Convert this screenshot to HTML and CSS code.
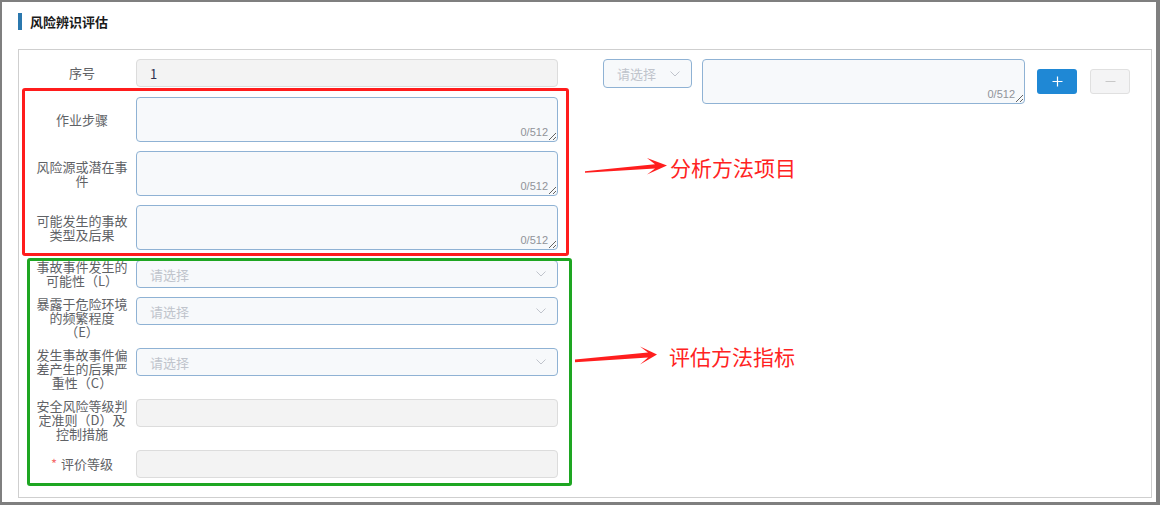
FILE: index.html
```html
<!DOCTYPE html>
<html lang="zh-CN">
<head>
<meta charset="utf-8">
<title>风险辨识评估</title>
<link rel="stylesheet" href="styles.css">
</head>
<body>
<div class="frame">
  <div class="title"><span class="title-bar"></span><span class="title-text">风险辨识评估</span></div>
  <div class="panel">
    <div class="form">
      <div class="item gap10">
        <div class="label">序号</div>
        <div class="input disabled"><span class="value">1</span></div>
      </div>
      <div class="item">
        <div class="label">作业步骤</div>
        <div class="ta-wrap"><textarea class="ta"></textarea><span class="count">0/512</span></div>
      </div>
      <div class="item">
        <div class="label">风险源或潜在事件</div>
        <div class="ta-wrap"><textarea class="ta"></textarea><span class="count">0/512</span></div>
      </div>
      <div class="item gap10">
        <div class="label">可能发生的事故类型及后果</div>
        <div class="ta-wrap"><textarea class="ta"></textarea><span class="count">0/512</span></div>
      </div>
      <div class="item">
        <div class="label">事故事件发生的可能性（L）</div>
        <div class="select"><span>请选择</span><svg class="chev" width="10" height="6" viewBox="0 0 10 6"><path d="M0.5 0.5 L5 5 L9.5 0.5" fill="none" stroke="#c0c4cc" stroke-width="1"/></svg></div>
      </div>
      <div class="item">
        <div class="label">暴露于危险环境的频繁程度（E）</div>
        <div class="select"><span>请选择</span><svg class="chev" width="10" height="6" viewBox="0 0 10 6"><path d="M0.5 0.5 L5 5 L9.5 0.5" fill="none" stroke="#c0c4cc" stroke-width="1"/></svg></div>
      </div>
      <div class="item">
        <div class="label">发生事故事件偏差产生的后果严重性（C）</div>
        <div class="select"><span>请选择</span><svg class="chev" width="10" height="6" viewBox="0 0 10 6"><path d="M0.5 0.5 L5 5 L9.5 0.5" fill="none" stroke="#c0c4cc" stroke-width="1"/></svg></div>
      </div>
      <div class="item">
        <div class="label">安全风险等级判定准则（D）及控制措施</div>
        <div class="input disabled"></div>
      </div>
      <div class="item">
        <div class="label"><span><span class="req">*</span>评价等级</span></div>
        <div class="input disabled"></div>
      </div>
    </div>
    <div class="extra">
      <div class="select small"><span>请选择</span><svg class="chev" width="10" height="6" viewBox="0 0 10 6"><path d="M0.5 0.5 L5 5 L9.5 0.5" fill="none" stroke="#c0c4cc" stroke-width="1"/></svg></div>
      <div class="ta-wrap small"><textarea class="ta"></textarea><span class="count">0/512</span></div>
      <div class="btn btn-add"><svg width="11" height="11" viewBox="0 0 11 11"><path d="M5.5 0.5 V10.5 M0.5 5.5 H10.5" stroke="#fff" stroke-width="1.2"/></svg></div>
      <div class="btn btn-del"><svg width="11" height="11" viewBox="0 0 11 11"><path d="M0.5 5.5 H10.5" stroke="#c8c8c8" stroke-width="1"/></svg></div>
    </div>
  </div>

  <div class="mark mark-red"></div>
  <div class="mark mark-green"></div>
  <svg class="arrows" width="1160" height="505" viewBox="0 0 1160 505">
    <polygon points="585,171.2 655,164.3 647,158 667,165.5 647,174.5 655,168.6 585,172.8" fill="#ff1e1e"/>
    <polygon points="575,359.6 648,352.6 640,346.5 657,354.5 640,364.5 648,357.4 575,362.2" fill="#ff1e1e"/>
  </svg>
  <span class="note note-1">分析方法项目</span>
  <span class="note note-2">评估方法指标</span>
</div>
</body>
</html>
```

FILE: styles.css
```css
html, body {
  margin: 0;
  padding: 0;
  background: #ffffff;
}

.frame {
  position: relative;
  width: 1160px;
  height: 505px;
  box-sizing: border-box;
  border-style: solid;
  border-color: #7f7f7f;
  border-width: 2px 4px 3px 2px;
  background: #ffffff;
  display: flex;
  flex-direction: column;
  font-family: "Noto Sans CJK SC", "Liberation Sans", sans-serif;
  text-spacing-trim: space-all;
}

.title {
  display: flex;
  align-items: center;
  height: 17px;
  padding: 11px 0 0 16px;
  margin-bottom: 19px;
  flex: none;
}

.title-bar {
  width: 4px;
  height: 17px;
  background: #2b78ae;
  margin-right: 8px;
}

.title-text {
  font-size: 13px;
  font-weight: bold;
  line-height: 17px;
  color: #1a1a1a;
}

.panel {
  flex: 1;
  margin: 0 4px 4px 16px;
  border: 1px solid #cfcfcf;
  padding: 9px 0 0 15px;
  display: flex;
  align-items: flex-start;
}

.form {
  width: 524px;
  flex: none;
}

.item {
  display: flex;
  align-items: stretch;
  margin-bottom: 9px;
}

.item.gap10 {
  margin-bottom: 10px;
}

.label {
  width: 96px;
  flex: none;
  margin-right: 6px;
  display: flex;
  align-items: center;
  justify-content: center;
  text-align: center;
  font-size: 13px;
  line-height: 14px;
  color: #606266;
  text-spacing-trim: space-all;
}

.req {
  color: #f56c6c;
  margin-right: 4px;
}

.input,
.select,
.ta-wrap {
  width: 422px;
  flex: none;
  align-self: flex-start;
  box-sizing: border-box;
}

.input {
  height: 28px;
  border: 1px solid #dcdcdc;
  border-radius: 4px;
  background: #f3f3f3;
  display: flex;
  align-items: center;
  padding-left: 13px;
  font-size: 13px;
  color: #2f3150;
}

.select {
  height: 28px;
  border: 1px solid #8fb2d4;
  border-radius: 4px;
  background: #f7f9fb;
  display: flex;
  align-items: center;
  justify-content: space-between;
  padding: 0 11px 0 13px;
  font-size: 13px;
  color: #c0c4cc;
}

.chev {
  display: block;
}

.ta-wrap {
  position: relative;
  height: 45px;
}

.ta {
  display: block;
  width: 100%;
  height: 100%;
  box-sizing: border-box;
  margin: 0;
  border: 1px solid #8fb2d4;
  border-radius: 4px;
  background: #f7f9fb;
  resize: both;
  font-family: inherit;
  font-size: 13px;
  outline: none;
}

.count {
  position: absolute;
  right: 10px;
  bottom: 4px;
  font-family: "Liberation Sans", sans-serif;
  font-size: 11px;
  line-height: 11px;
  color: #909399;
}

.extra {
  display: flex;
  align-items: center;
  height: 45px;
  margin-left: 45px;
}

.select.small {
  width: 89px;
  height: 29px;
}

.ta-wrap.small {
  width: 323px;
  margin-left: 10px;
  align-self: center;
}

.btn {
  width: 40px;
  height: 25px;
  box-sizing: border-box;
  border-radius: 3px;
  display: flex;
  align-items: center;
  justify-content: center;
}

.btn svg {
  display: block;
}

.btn-add {
  background: #1f88d5;
  margin-left: 12px;
}

.btn-del {
  background: #f4f4f5;
  border: 1px solid #e0e0e0;
  margin-left: 13px;
}

.mark {
  position: absolute;
  box-sizing: border-box;
  border-radius: 3px;
  pointer-events: none;
}

.mark-red {
  left: 20px;
  top: 86px;
  width: 547px;
  height: 168px;
  border: 3px solid #ff1c1c;
}

.mark-green {
  left: 25px;
  top: 256px;
  width: 545px;
  height: 228px;
  border: 3px solid #1ea622;
}

.arrows {
  position: absolute;
  left: -2px;
  top: -2px;
  pointer-events: none;
}

.note {
  position: absolute;
  font-size: 21px;
  line-height: 21px;
  color: #ff2222;
  white-space: nowrap;
}

.note-1 {
  left: 668px;
  top: 155px;
}

.note-2 {
  left: 667px;
  top: 344px;
}
```
